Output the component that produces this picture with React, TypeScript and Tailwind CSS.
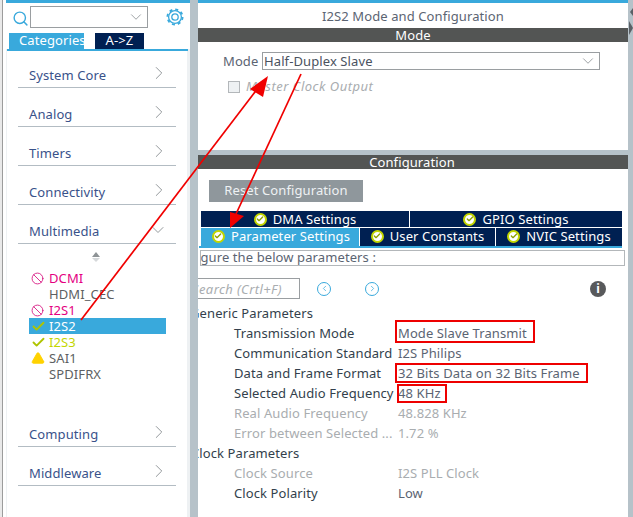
import { ChevronDown, ChevronRight, ChevronLeft, Search, Ban, Check, TriangleAlert } from "lucide-react";

const collapsedTop = ["System Core", "Analog", "Timers", "Connectivity"];

function Category({ name, open }: { name: string; open?: boolean }) {
  return (
    <div className="mx-[11px] flex h-[39px] items-end justify-between border-b border-[#b3bcc3] pb-[2px] pl-[11px] text-[#39528a]">
      <span className="leading-[20px]">{name}</span>
      {open ? (
        <ChevronDown className="mb-[1px] mr-[8px] text-[#8a8f93]" size={20} strokeWidth={1.1} />
      ) : (
        <ChevronRight className="mb-[1px] mr-[6px] text-[#8a8f93]" size={22} strokeWidth={1} />
      )}
    </div>
  );
}

function Peripheral({ name, state }: { name: string; state?: "ban" | "ok" | "warn" | "sel" }) {
  const colour =
    state === "ban" ? "text-[#e4007f]" : state === "ok" ? "text-[#c3d600]" : state === "sel" ? "bg-[#39a9dc] text-white" : "text-[#5d5f62]";
  return (
    <div className={`flex h-[16px] w-[137px] items-center leading-[16px] ${colour}`}>
      <span className="flex w-[20px] justify-start pl-[2px]">
        {state === "ban" && <Ban size={13} className="text-[#d6127f]" strokeWidth={1.6} />}
        {(state === "ok" || state === "sel") && <Check size={15} className="text-[#afc400]" strokeWidth={3} />}
        {state === "warn" && <TriangleAlert size={14} className="fill-[#ffd200] text-[#ffd200]" strokeWidth={1.6} />}
      </span>
      {name}
    </div>
  );
}

function Gear() {
  return (
    <svg className="ml-[18px] mt-[2px] text-[#39a9dc]" width="18" height="18" viewBox="0 0 18 18" fill="none" stroke="currentColor">
      <circle cx="9" cy="9" r="6.4" strokeWidth="1.3" />
      <circle cx="9" cy="9" r="7.6" strokeWidth="1.8" strokeDasharray="3 2.97" />
      <circle cx="9" cy="9" r="3.2" strokeWidth="1.3" />
    </svg>
  );
}

function TabCheck() {
  return (
    <span className="flex h-[13px] w-[13px] items-center justify-center rounded-full border-2 border-[#c3d600] bg-white">
      <Check size={8} className="text-[#8fa000]" strokeWidth={4} />
    </span>
  );
}

function ConfigTab({ label, active, className }: { label: string; active?: boolean; className: string }) {
  return (
    <div className={`flex items-center justify-center gap-[6px] text-white ${active ? "bg-[#39a9dc]" : "bg-[#002052]"} ${className}`}>
      <TabCheck />
      {label}
    </div>
  );
}

function Param({ label, value, off }: { label: string; value: string; off?: boolean }) {
  return (
    <div className="flex h-[20px] items-center leading-[20px]">
      <span className={`w-[200px] pl-[36px] whitespace-nowrap ${off ? "text-[#a9adb0]" : "text-[#333f4c]"}`}>{label}</span>
      <span className={off ? "text-[#a9adb0]" : "text-[#5b6472]"}>{value}</span>
    </div>
  );
}

function ClippedHeading({ text, shift }: { text: string; shift: string }) {
  return (
    <div className="h-[20px] overflow-hidden leading-[20px] whitespace-nowrap text-[#333f4c]">
      <span className={`block ${shift}`}>{text}</span>
    </div>
  );
}

export default function App() {
  return (
    <div
      className="relative flex h-[517px] w-[633px] overflow-hidden bg-[#b6c2c9] text-[13px] tracking-[0.1px]"
      style={{ fontFamily: '"Noto Sans", sans-serif' }}
    >
      <div className="h-full w-[3px] border-r border-[#9c9c9c] bg-[#e9e9e9]" />
      <div className="h-full w-[3px] bg-white" />

      {/* left panel */}
      <div className="flex h-full w-[184px] flex-col border-t-[3px] border-[#39a9dc] bg-[#eef1f3]">
        <div className="flex h-[30px] shrink-0 items-start bg-white pt-[3px]">
          <Search size={17} className="ml-[6px] mt-[4px] text-[#39a9dc]" strokeWidth={2} />
          <div className="ml-[1px] flex h-[22px] w-[118px] items-center justify-end border border-[#9a9ea1] bg-white pr-[2px]">
            <ChevronDown size={18} className="text-[#8a8f93]" strokeWidth={1.1} />
          </div>
          <Gear />
        </div>
        <div className="flex h-[16px] shrink-0 items-stretch bg-white pl-[3px] leading-[15px] text-white">
          <div className="w-[75px] bg-[#39a9dc] pl-[10px]">Categories</div>
          <div className="ml-[11px] w-[49px] bg-[#002052] text-center">A-&gt;Z</div>
        </div>
        <div className="mx-[1px] h-[2px] w-[181px] shrink-0 bg-[#39a9dc]" />
        <div className="mx-[1px] flex w-[180px] grow flex-col bg-white">
          <div className="mt-[-2px]" />
          {collapsedTop.map((c) => (
            <Category key={c} name={c} />
          ))}
          <Category name="Multimedia" open />
          <div className="flex h-[26px] flex-col items-center justify-center">
            <div className="mr-[3px] h-0 w-0 border-x-[4px] border-b-[5px] border-x-transparent border-b-[#8e9396]" />
            <div className="mr-[3px] mt-[1px] h-0 w-0 border-x-[4px] border-t-[4px] border-x-transparent border-t-[#d5d8da]" />
          </div>
          <div className="ml-[22px] flex flex-col">
            <Peripheral name="DCMI" state="ban" />
            <Peripheral name="HDMI_CEC" />
            <Peripheral name="I2S1" state="ban" />
            <Peripheral name="I2S2" state="sel" />
            <Peripheral name="I2S3" state="ok" />
            <Peripheral name="SAI1" state="warn" />
            <Peripheral name="SPDIFRX" />
          </div>
          <div className="h-[26px]" />
          <Category name="Computing" />
          <Category name="Middleware" />
        </div>
      </div>

      <div className="w-[8px]" />

      {/* right panel */}
      <div className="flex h-full w-[430px] flex-col border-t-[3px] border-[#39a9dc]">
        <div className="flex h-[147px] shrink-0 flex-col bg-white">
          <div className="h-[25px] text-center leading-[27px] text-[#5b6472]">I2S2 Mode and Configuration</div>
          <div className="h-[14px] bg-[#535554] text-center leading-[14px] text-white">Mode</div>
          <div className="mt-[10px] flex h-[18px] items-center pl-[25px] text-[#5b6472]">
            <span className="w-[39px] pt-[1px]">Mode</span>
            <div className="flex h-[18px] w-[338px] items-center justify-between border border-[#9a9ea1] pl-[1px] pr-[2px] text-[#4a5260]">
              <span className="pt-[1px]">Half-Duplex Slave</span>
              <ChevronDown size={18} className="text-[#8a8f93]" strokeWidth={1.1} />
            </div>
          </div>
          <div className="mt-[7px] flex items-center pl-[30px] italic tracking-[0.5px] text-[#a9adb0]">
            <span className="mr-[6px] h-[12px] w-[12px] border border-[#b3b7ba] bg-[#eef1f3]" />
            Master Clock Output
          </div>
        </div>

        <div className="h-[5px] shrink-0" />

        <div className="flex grow flex-col bg-white">
          <div className="h-[14px] shrink-0 bg-[#535554] pr-[2px] text-center leading-[14px] text-white">Configuration</div>
          <div className="ml-[11px] mt-[11px] flex h-[22px] w-[154px] shrink-0 items-center justify-center bg-[#8f979c] text-[#eef1f3]">
            Reset Configuration
          </div>
          <div className="ml-[3px] mt-[9px] flex h-[16px] w-[421px] shrink-0 gap-[1px] leading-[16px]">
            <ConfigTab label="DMA Settings" className="w-[208px]" />
            <ConfigTab label="GPIO Settings" className="w-[212px]" />
          </div>
          <div className="ml-[3px] mt-[1px] flex h-[18px] w-[421px] shrink-0 gap-[1px] leading-[18px]">
            <ConfigTab label="Parameter Settings" active className="w-[158px] pb-[2px] pl-[2px]" />
            <ConfigTab label="User Constants" className="w-[135px] pb-[2px]" />
            <ConfigTab label="NVIC Settings" className="w-[126px] pb-[2px]" />
          </div>
          <div className="ml-[1px] h-[2px] w-[423px] shrink-0 bg-[#39a9dc]" />
          <div className="ml-[2px] mt-[2px] h-[16px] w-[425px] shrink-0 overflow-hidden border border-[#b3b7ba] leading-[13px] whitespace-nowrap text-[#5b6472]">
            <span className="ml-[-33px] block">Configure the below parameters :</span>
          </div>
          <div className="mt-[12px] flex h-[21px] shrink-0 items-center">
            <div className="flex h-[21px] w-[102px] items-center overflow-hidden border border-l-0 border-[#9a9ea1] pt-[2px] whitespace-nowrap italic tracking-[0.4px] text-[#a9adb0]">
              <span className="ml-[-6px]">Search (Crtl+F)</span>
            </div>
            <span className="ml-[17px] flex h-[14px] w-[14px] items-center justify-center rounded-full border border-[#39a9dc]">
              <ChevronLeft size={9} className="text-[#39a9dc]" strokeWidth={2} />
            </span>
            <span className="ml-[34px] flex h-[14px] w-[14px] items-center justify-center rounded-full border border-[#39a9dc]">
              <ChevronRight size={9} className="text-[#39a9dc]" strokeWidth={2} />
            </span>
            <span className="ml-[211px] flex h-[16px] w-[16px] items-center justify-center rounded-full bg-[#58595b] text-[12px] font-bold leading-none text-white">
              i
            </span>
          </div>
          <div className="mt-[4px] flex flex-col">
            <ClippedHeading text="Generic Parameters" shift="ml-[-8px]" />
            <Param label="Transmission Mode" value="Mode Slave Transmit" />
            <Param label="Communication Standard" value="I2S Philips" />
            <Param label="Data and Frame Format" value="32 Bits Data on 32 Bits Frame" />
            <Param label="Selected Audio Frequency" value="48 KHz" />
            <Param label="Real Audio Frequency" value="48.828 KHz" off />
            <Param label="Error between Selected ..." value="1.72 %" off />
            <ClippedHeading text="Clock Parameters" shift="ml-[-7px]" />
            <Param label="Clock Source" value="I2S PLL Clock" off />
            <Param label="Clock Polarity" value="Low" />
          </div>
        </div>
      </div>

      {/* collapse handles of the splitter */}
      <div className="w-[5px] shrink-0">
        <svg width="5" height="40" viewBox="0 0 5 40" className="text-[#5a6066]" fill="currentColor">
          <polygon points="2,12 5,8 5,16" />
          <polygon points="1,21 5,28 1,35" />
        </svg>
      </div>

      {/* annotations drawn over the screenshot */}
      <div className="absolute left-[395px] top-[320px] h-[23px] w-[140px] border-2 border-[#ee0000]" />
      <div className="absolute left-[395px] top-[363px] h-[20px] w-[193px] border-2 border-[#ee0000]" />
      <div className="absolute left-[397px] top-[384px] h-[19px] w-[50px] border-2 border-[#ee0000]" />
      <svg className="absolute left-0 top-0" width="633" height="517" fill="none">
        <path d="M81 320 L258 88" stroke="#f00000" strokeWidth="1.7" />
        <polygon points="268,76 250,89 263,97" fill="#f00000" />
        <path d="M301 74 L236 214" stroke="#f00000" strokeWidth="1.7" />
        <polygon points="230,228 230,212 244,216" fill="#f00000" />
      </svg>
    </div>
  );
}
